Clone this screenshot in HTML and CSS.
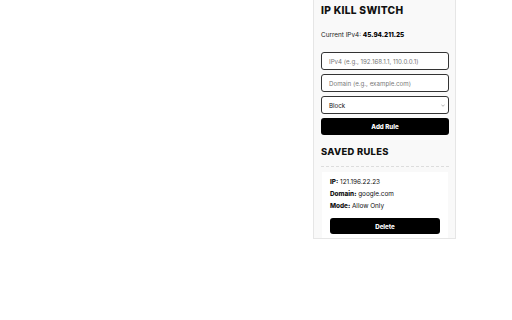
FILE: index.html
```html
<!DOCTYPE html>
<html>
<head>
<meta charset="utf-8">
<link rel="stylesheet" href="styles.css">
</head>
<body>
<div class="panel">
  <h1 class="title">IP KILL SWITCH</h1>
  <p class="current">Current IPv4: <b>45.94.211.25</b></p>
  <div class="form">
    <div class="field">IPv4 (e.g., 192.168.1.1, 110.0.0.1)</div>
    <div class="field">Domain (e.g., example.com)</div>
    <div class="field select"><span>Block</span><svg width="4" height="3" viewBox="0 0 4 3"><path d="M0.4 0.6 L2 2.3 L3.6 0.6" fill="none" stroke="#888" stroke-width="0.6"/></svg></div>
    <div class="btn">Add Rule</div>
  </div>
  <h2 class="subtitle">SAVED RULES</h2>
  <div class="sep"></div>
  <div class="card">
    <p class="row"><b>IP:</b> 121.196.22.23</p>
    <p class="row"><b>Domain:</b> google.com</p>
    <p class="row"><b>Mode:</b> Allow Only</p>
    <div class="btn del">Delete</div>
  </div>
</div>
</body>
</html>
```
FILE: styles.css
```css
html, body { margin: 0; padding: 0; background: #fff; }
body { font-family: "Inter", "Liberation Sans", sans-serif; color: #111; }
.panel {
  margin-left: 313px;
  width: 143px;
  height: 239px;
  box-sizing: border-box;
  background: #f9f9f9;
  border: 1px solid #e6e6e6;
  border-top: none;
  padding: 0 6px 0 7px;
  overflow: hidden;
  display: flex;
  flex-direction: column;
}
.title {
  margin: 4px 0 0 0;
  font-size: 10.2px;
  font-weight: 800;
  letter-spacing: 0.3px;
  line-height: 12px;
}
.current {
  margin: 14px 0 0 0;
  font-size: 6.4px;
  line-height: 10px;
  color: #222;
}
.current b { font-weight: 800; color: #000; }
.form { display: flex; flex-direction: column; gap: 4px; margin-top: 12px; }
.field {
  height: 18px;
  box-sizing: border-box;
  border: 1px solid #333;
  border-radius: 3px;
  background: #fff;
  font-size: 6.2px;
  color: #777;
  padding-left: 7px;
  display: flex;
  align-items: center;
}
.select { color: #111; justify-content: space-between; padding-right: 3px; }
.btn {
  height: 17px;
  background: #000;
  color: #fff;
  border-radius: 3px;
  font-size: 6.2px;
  font-weight: 800;
  display: flex;
  align-items: center;
  justify-content: center;
}
.subtitle {
  margin: 11px 0 0 0;
  font-size: 9.4px;
  font-weight: 800;
  letter-spacing: 0.3px;
  line-height: 12px;
}
.sep { margin-top: 8px; border-top: 1px dashed #ddd; }
.card {
  margin: 5px 1px 0 1px;
  background: #fff;
  padding: 4px 8px 4px 8px;
  flex: 1;
}
.row { margin: 0; font-size: 6.4px; line-height: 12px; color: #111; }
.row b { font-weight: 800; }
.del { margin-top: 6px; height: 16px; }
```
